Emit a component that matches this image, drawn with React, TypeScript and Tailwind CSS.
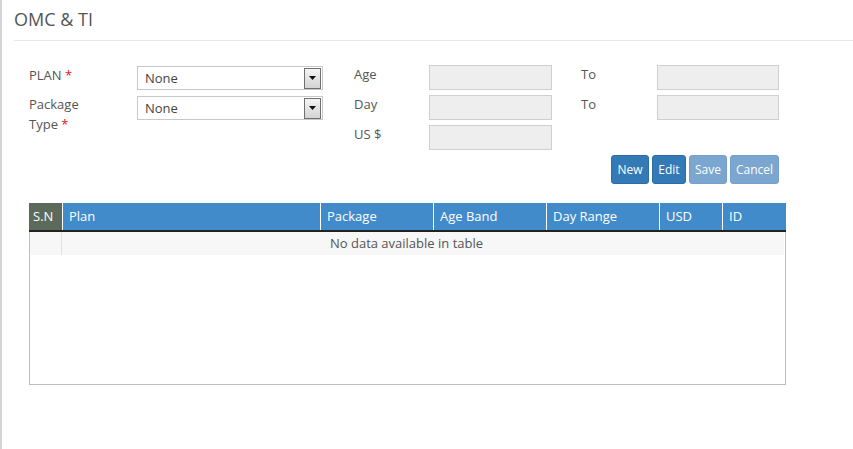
import React from "react";

function Arrow() {
  return (
    <div className="w-[17px] h-[21px] border border-[#707070] bg-gradient-to-b from-[#f4f4f4] to-[#d4d4d4] flex items-center justify-center">
      <svg width="7" height="4" viewBox="0 0 7 4"><path d="M0 0h7L3.5 4z" fill="#111" /></svg>
    </div>
  );
}

function Select() {
  return (
    <div className="w-[186px] h-[24px] border border-[#c8c8c8] bg-white flex items-center justify-between pl-[7px] pr-[1px] text-[13px] text-[#444]">
      <span className="pt-[1px]">None</span>
      <Arrow />
    </div>
  );
}

function Input() {
  return <div className="w-[123px] h-[25px] border border-[#cfcfcf] bg-[#eeeeee]" />;
}

export default function App() {
  const cols = [
    { t: "Plan", w: "w-[258px]" },
    { t: "Package", w: "w-[113px]" },
    { t: "Age Band", w: "w-[113px]" },
    { t: "Day Range", w: "w-[113px]" },
    { t: "USD", w: "w-[63px]" },
    { t: "ID", w: "flex-1" },
  ];
  return (
    <div className="w-[853px] h-[449px] bg-white border-l-2 border-[#d4d4d4] text-[13px] text-[#555]" style={{ fontFamily: '"Open Sans", "Noto Sans", sans-serif' }}>
      <div className="ml-[12px] border-b border-[#e8e8e8] h-[41px] flex items-center">
        <span className="text-[18px] text-[#555] mt-[-1px]">OMC &amp; TI</span>
      </div>
      <div className="flex pt-[24px] pl-[27px]">
        <div className="w-[108px] flex flex-col">
          <div className="h-[30px] pt-[1px]">PLAN <span className="text-[#e02020]">*</span></div>
          <div className="leading-[20px] mt-[-1px]">Package<br />Type <span className="text-[#e02020]">*</span></div>
        </div>
        <div className="flex flex-col gap-[6px] pt-[1px]">
          <Select />
          <Select />
        </div>
        <div className="ml-[31px] w-[75px] flex flex-col">
          <div className="h-[30px]">Age</div>
          <div className="h-[30px]">Day</div>
          <div className="h-[30px]">US $</div>
        </div>
        <div className="flex flex-col gap-[5px]">
          <Input />
          <Input />
          <Input />
        </div>
        <div className="ml-[29px] w-[76px] flex flex-col">
          <div className="h-[30px]">To</div>
          <div className="h-[30px]">To</div>
        </div>
        <div className="flex flex-col gap-[5px]">
          <div className="w-[122px] h-[25px] border border-[#cfcfcf] bg-[#eeeeee]" />
          <div className="w-[122px] h-[25px] border border-[#cfcfcf] bg-[#eeeeee]" />
        </div>
      </div>
      <div className="flex justify-end gap-[3px] w-[777px] mt-0 text-white text-[12px]">
        <div className="h-[29px] w-[38px] justify-center flex items-center rounded-[3px] bg-[#337ab7] border border-[#2e6da4]">New</div>
        <div className="h-[29px] w-[34px] justify-center flex items-center rounded-[3px] bg-[#337ab7] border border-[#2e6da4]">Edit</div>
        <div className="h-[29px] w-[38px] justify-center flex items-center rounded-[3px] bg-[#7aa6d0] border border-[#75a0c8]">Save</div>
        <div className="h-[29px] w-[49px] justify-center flex items-center rounded-[3px] bg-[#7aa6d0] border border-[#75a0c8]">Cancel</div>
      </div>
      <div className="ml-[27px] mt-[19px] w-[757px]">
        <div className="flex h-[29px] text-white border-b-2 border-[#222]">
          <div className="w-[33px] bg-[#5c6a5c] flex items-center pl-[4px]">S.N</div>
          {cols.map((c) => (
            <div key={c.t} className={`${c.w} bg-[#428bca] flex items-center pl-[6px] border-l border-white`}>{c.t}</div>
          ))}
        </div>
        <div className="h-[153px] border border-t-0 border-[#bdbdbd]">
          <div className="flex h-[23px] bg-[#f7f7f7] mr-[1px]">
            <div className="w-[32px] border-r border-[#e2e2e2]" />
            <div className="flex-1 flex items-center justify-center pr-[33px] text-[#555]">No data available in table</div>
          </div>
        </div>
      </div>
    </div>
  );
}
